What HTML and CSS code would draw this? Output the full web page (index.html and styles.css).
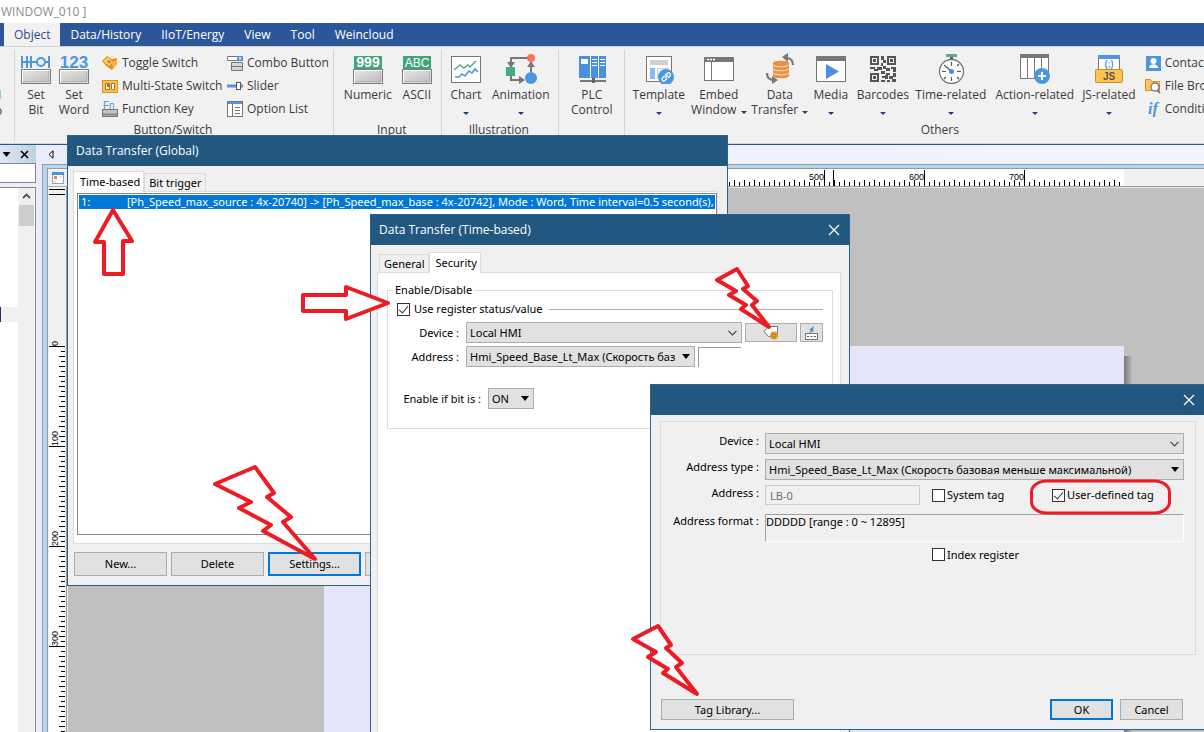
FILE: index.html
```html
<!DOCTYPE html>
<html lang="en">
<head>
<meta charset="utf-8">
<title>WINDOW_010</title>
<link rel="stylesheet" href="styles.css">
</head>
<body>
<svg class="defs" aria-hidden="true">
  <defs>
    <linearGradient id="keyface" x1="0" y1="0" x2="1" y2="1"><stop offset="0" stop-color="#e4e4e4"/><stop offset="1" stop-color="#bdbdbd"/></linearGradient>
    <symbol id="key" viewBox="0 0 30 15"><rect x=".5" y=".5" width="29" height="14" fill="#fff" stroke="#7d7d7d"/><rect x="2" y="2" width="26" height="11" fill="url(#keyface)"/><path d="M2 13h26V2" fill="none" stroke="#a5a5a5"/></symbol>
    <symbol id="chevron" viewBox="0 0 9 6"><path d="M.5.8 4.500 4.800 8.500.8" fill="none" stroke="#444" stroke-width="1.200"/></symbol>
    <symbol id="triangle" viewBox="0 0 8 5"><path d="M0 0h8L4 5z" fill="#000"/></symbol>
    <symbol id="cross" viewBox="0 0 12 12"><path d="M1 1l10 10M11 1 1 11" fill="none" stroke="#fff" stroke-width="1.200"/></symbol>
  </defs>
</svg>
<header class="titlebar">WINDOW_010 ]</header>
<nav class="tabs">
  <button class="tab tab-active">Object</button>
  <button class="tab">Data/History</button>
  <button class="tab">IIoT/Energy</button>
  <button class="tab">View</button>
  <button class="tab">Tool</button>
  <button class="tab">Weincloud</button>
</nav>
<section class="ribbon">
  <div class="group group-cut"><i class="cut-icon"></i><span>o</span></div>
  <div class="group">
    <div class="tools">
      <button class="tool w-38"><svg class="icon" viewBox="0 0 32 32"><path d="M2 4v12M7 4v12M2 10h5M7 10h4M11 4v12M11 10h6M25 10h4M29 4v12" fill="none" stroke="#4a97e0" stroke-width="2"/><circle cx="21" cy="10" r="4" fill="none" stroke="#4a97e0" stroke-width="2"/><use href="#key" x="1" y="17" width="30" height="15"/></svg><span>Set</span><span>Bit</span></button>
      <button class="tool w-38"><svg class="icon" viewBox="0 0 32 32"><text x="16" y="16" class="t-123">123</text><use href="#key" x="1" y="17" width="30" height="15"/></svg><span>Set</span><span>Word</span></button>
      <div class="list list-switch">
        <button class="mini"><svg viewBox="0 0 16 16"><path d="M0 6 5 1l5 3 5-1v6l-5 6-6-4z" fill="#d9942c"/><path d="M1 6l5-4 5 5-4 4z" fill="#ffc960"/><path d="m10 8 5-4v4l-4 6z" fill="#ffb638"/><path d="M5 6.500 7 5l2 2-2 1.500z" fill="#c47e16"/></svg>Toggle Switch</button>
        <button class="mini"><svg viewBox="0 0 16 16"><rect x=".5" y="2.500" width="15" height="12" fill="#ffc04a" stroke="#d8922b"/><path d="M3.500 5.500h4v6h-4zM9.500 5.500h3v6h-3z" fill="#fff" stroke="#a8721e"/><path d="M5 6h2v3H5z" fill="#a8721e"/></svg>Multi-State Switch</button>
        <button class="mini"><svg viewBox="0 0 16 16"><text x="1" y="8" class="t-fn">Fn</text><rect x=".5" y="8.500" width="15" height="7" fill="#c4c4c4" stroke="#777"/><path d="M1 13.500h14" stroke="#888" stroke-width="2"/></svg>Function Key</button>
      </div>
      <div class="list">
        <button class="mini"><svg viewBox="0 0 16 16"><path d="M.5 1.500h15v4H.5z" fill="#fff" stroke="#777"/><path d="M10 1h6v5h-6z" fill="#4a97e0"/><path d="M11.500 2.500h3L13 5z" fill="#fff"/><path d="M4.500 7.500h11v8h-11zM4.500 11.500h11" fill="#d5d5d5" stroke="#777"/></svg>Combo Button</button>
        <button class="mini"><svg viewBox="0 0 16 16"><path d="M0 8h16" stroke="#4a97e0" stroke-width="3"/><rect x="9.500" y="4.500" width="4" height="7" fill="#fff" stroke="#555"/></svg>Slider</button>
        <button class="mini"><svg viewBox="0 0 16 16"><rect x=".5" y=".5" width="15" height="15" fill="#fff" stroke="#777"/><path d="M1 1h14v2H1z" fill="#4a97e0"/><path d="M5.500 3v12M8 6.500h5M8 9.500h5M8 12.500h5" stroke="#777"/></svg>Option List</button>
      </div>
    </div>
    <div class="caption">Button/Switch</div>
  </div>
  <div class="group group-input">
    <div class="tools">
      <button class="tool w-50"><svg class="icon" viewBox="0 0 32 32"><rect x="2" y="4" width="28" height="13" fill="#3fa67c"/><text x="16" y="15" class="t-999">999</text><use href="#key" x="1" y="17" width="30" height="15"/></svg>Numeric</button>
      <button class="tool w-48"><svg class="icon" viewBox="0 0 32 32"><rect x="2" y="4" width="28" height="13" fill="#3fa67c"/><text x="16" y="15" class="t-abc">ABC</text><use href="#key" x="1" y="17" width="30" height="15"/></svg>ASCII</button>
    </div>
    <div class="caption">Input</div>
  </div>
  <div class="group">
    <div class="tools">
      <button class="tool w-44"><svg class="icon" viewBox="0 0 32 32"><rect x="1.500" y="4.500" width="29" height="26" fill="#fff" stroke="#777"/><path d="m4 18 6-5 4 3 4-3 2 2 6-6" fill="none" stroke="#4fa98a" stroke-width="1.500"/><path d="M5 25h4l3-3 3 2 4-5 3 2 3-4 3 3" fill="none" stroke="#4a97e0" stroke-width="1.500"/></svg>Chart<i class="arrow arrow-below"></i></button>
      <button class="tool w-66"><svg class="icon" viewBox="0 0 32 32"><path d="M25 6H6v5M6 23v5h10M26 20v-8" fill="none" stroke="#777" stroke-width="2"/><path d="M2 10h8l-4 6zM14 24v8l6-4zM22 15h8l-4-6z" fill="#777"/><circle cx="26" cy="6" r="4" fill="#ff7058"/><rect x="1" y="15" width="9" height="9" fill="#45aa82"/><circle cx="26" cy="26" r="6" fill="#4a97e0"/></svg>Animation<i class="arrow arrow-below"></i></button>
    </div>
    <div class="caption">Illustration</div>
  </div>
  <div class="group group-plc">
    <div class="tools">
      <button class="tool w-58"><svg class="icon" viewBox="0 0 32 32"><path d="M3 4h11v22H3zM15 4h7v22h-7zM23 4h7v22h-7z" fill="#4a90de"/><path d="M5 7h7v5H5z" fill="#fff"/><path d="M16 7.500h5M16 10.500h5M16 13.500h5M24 7.500h5M24 10.500h5M24 13.500h5" stroke="#fff"/><path d="M4 29h26" stroke="#777" stroke-width="2"/><path d="M16 26h3v5h-3z" fill="#666"/></svg><span>PLC</span><span>Control</span></button>
    </div>
  </div>
  <div class="group group-wide">
    <div class="tools">
      <button class="tool w-58"><svg class="icon" viewBox="0 0 32 32"><rect x="3.500" y="4.500" width="25" height="25" fill="#fff" stroke="#777"/><path d="M7 8h18v5H7z" fill="#d0d0d0"/><path d="M7 16h5v11H7z" fill="#84bdf5"/><path d="M14.500 27V16.500H26" fill="none" stroke="#ccc"/><circle cx="23" cy="25" r="8" fill="#4a97e0"/><path d="m22 26 3-3M21.500 24l-2 2a1.500 1.500 0 0 0 2.500 2.500l2-2M22 23.500l2-2a1.500 1.500 0 0 1 3 2.500l-2 2" fill="none" stroke="#fff" stroke-width="1.300"/></svg>Template<i class="arrow arrow-below"></i></button>
      <button class="tool w-62"><svg class="icon" viewBox="0 0 32 32"><rect x="1.500" y="6.500" width="29" height="22" fill="#fff" stroke="#777"/><path d="M1 5h30v5H1z" fill="#777"/><path d="M4 7.500h2M7 7.500h2M10 7.500h2" stroke="#fff" stroke-width="1.500"/><path d="M8.500 10v18" stroke="#777"/></svg><span>Embed</span><span>Window <i class="arrow"></i></span></button>
      <button class="tool w-60"><svg class="icon" viewBox="0 0 32 32"><path d="M9 11c0-3 16-3 16 0v13c0 3-16 3-16 0z" fill="#ed9144"/><path d="M9 12.500c0 3 16 3 16 0M9 16.500c0 3 16 3 16 0M9 20.500c0 3 16 3 16 0" fill="none" stroke="#ffe3c6"/><path d="M29 13c0-5-3-7-7-7M3 21c0 5 3 7 7 7" fill="none" stroke="#777" stroke-width="2.200"/><path d="m18 5 6-4v9zM14 28l-6-4v8z" fill="#777"/></svg><span>Data</span><span>Transfer <i class="arrow"></i></span></button>
      <button class="tool w-42"><svg class="icon" viewBox="0 0 32 32"><rect x="1.500" y="4.500" width="29" height="25" fill="#fff" stroke="#777"/><path d="M1 4h30v5H1z" fill="#777"/><path d="m11 12 13 7.500L11 27z" fill="#4a90de"/></svg>Media<i class="arrow arrow-below"></i></button>
      <button class="tool w-62"><svg class="icon" viewBox="0 0 32 32"><path d="M4 5h7v7H4zM21 5h7v7h-7zM4 22h7v7H4z" fill="none" stroke="#555" stroke-width="2"/><path d="M6 7h3v3H6zM23 7h3v3h-3zM6 24h3v3H6zM14 4h3v4h-3zM16 8h3v3h-3zM14 11h2v3h-2zM3 15h5v2H3zM7 17h4v2H7zM10 15h5v3h-5zM16 14h3v3h-3zM19 16h4v3h-4zM24 15h5v2h-5zM26 17h3v3h-3zM14 19h4v3h-4zM19 21h4v2h-4zM15 24h3v2h-3zM18 23h3v4h-3zM14 28h4v2h-4zM22 24h4v3h-4zM26 21h3v4h-3zM20 28h3v2h-3zM25 27h4v3h-4z" fill="#555"/></svg>Barcodes<i class="arrow arrow-below"></i></button>
      <button class="tool w-74"><svg class="icon" viewBox="0 0 32 32"><path d="M11 2h11v3H11z" fill="#5fa893"/><path d="M15 5h3v3h-3z" fill="#555"/><circle cx="16.500" cy="19.500" r="12" fill="#fff" stroke="#777" stroke-width="1.300"/><path d="M16.500 10v4M16.500 25v4M7 19.500h4M22 19.500h4M22 14l2-2M22 25l2 2M11 25l-2 2M16 19l-7-6" stroke="#555" stroke-width="1.200"/><circle cx="16.500" cy="19.500" r="2.500" fill="#3d8fe0"/></svg>Time-related<i class="arrow arrow-below"></i></button>
      <button class="tool w-94"><svg class="icon" viewBox="0 0 32 32"><rect x="1.500" y="2.500" width="28" height="24" fill="#fff" stroke="#777"/><path d="M1 2h29v4H1z" fill="#777"/><path d="M8.500 6v20M15.500 6v20M22.500 6v20" stroke="#777"/><circle cx="23" cy="24" r="8" fill="#4a97e0"/><path d="M23 20v8M19 24h8" stroke="#fff" stroke-width="2"/></svg>Action-related<i class="arrow arrow-below"></i></button>
      <button class="tool w-54"><svg class="icon" viewBox="0 0 32 32"><rect x="5.500" y="3.500" width="21" height="14" fill="#fff" stroke="#777"/><path d="M5 3h22v4H5z" fill="#4a97e0"/><text x="16" y="15" class="t-code">(;)</text><rect x="2.500" y="17.500" width="27" height="13" rx="1" fill="#ffc24d" stroke="#c98d2d"/><text x="16" y="28" class="t-js">JS</text></svg>JS-related<i class="arrow arrow-below"></i></button>
      <div class="list">
        <button class="mini"><svg viewBox="0 0 16 16"><rect x="1" y="1" width="15" height="15" fill="#4a97e0"/><circle cx="8.500" cy="6" r="3" fill="#fff"/><path d="M4 13c0-5 9-5 9 0z" fill="#fff"/></svg>Contacts</button>
        <button class="mini"><svg viewBox="0 0 16 16"><path d="M.5 1.500h5l1 2h8v9H.5z" fill="#ffc55c" stroke="#d8922b"/><circle cx="10" cy="9" r="4" fill="#fff" stroke="#777" stroke-width="1.300"/><path d="m12 12 3 3" stroke="#777" stroke-width="1.800"/></svg>File Browser</button>
        <button class="mini"><svg viewBox="0 0 16 16"><text x="8" y="13" class="t-if">if</text></svg>Conditional</button>
      </div>
    </div>
    <div class="caption">Others</div>
  </div>
</section>

<main class="workspace">
  <aside class="side">
    <div class="side-head">
      <svg width="9" height="5"><use href="#triangle"/></svg>
      <svg width="9" height="9" viewBox="0 0 9 9"><path d="m1 1 7 7M8 1 1 8" stroke="#000" stroke-width="1.500"/></svg>
    </div>
    <input class="side-search" aria-label="Search">
    <div class="side-tree">
      <div class="tree-row"></div>
      <div class="scrollbar"><svg width="9" height="6" viewBox="0 0 9 6"><path d="M1 5l3.500-3.500L8 5" fill="none" stroke="#555" stroke-width="1.800"/></svg><i class="thumb"></i></div>
    </div>
  </aside>
  <div class="editor">
    <div class="strip"><svg width="6" height="9" viewBox="0 0 6 9"><path d="M5 .8v7.400L1 4.500z" fill="#fff" stroke="#000"/></svg></div>
    <div class="editor-grid">
      <div class="corner"><svg width="12" height="12" viewBox="0 0 12 12"><rect x=".5" y=".5" width="11" height="11" fill="#fff" stroke="#8aa4c4"/><path d="M0 0h12v3H0z" fill="#4a90de"/><path d="M2 4h3v3H2z" fill="#ed8b45"/><path d="M7 5h3M3 8v3" stroke="#ccc"/></svg></div>
      <svg class="hruler">
        <defs><pattern id="ht" x="6" y="0" width="10" height="17" patternUnits="userSpaceOnUse"><rect y="11" width="1" height="6"/><rect x="5" y="13" width="1" height="4"/></pattern></defs>
        <rect width="1056" height="17" fill="#fff"/><rect width="1056" height="17" fill="url(#ht)"/>
        <path d="M756.500 1v16M765.500 1v16M856.500 1v16M956.500 1v16" stroke="#000"/>
        <g class="ruler-text" text-anchor="end"><text x="756" y="11">500</text><text x="856" y="11">600</text><text x="956" y="11">700</text></g>
      </svg>
      <svg class="vruler">
        <defs><pattern id="vt" x="0" y="159" width="18" height="10" patternUnits="userSpaceOnUse"><rect x="11" width="6" height="1"/><rect x="13" y="5" width="4" height="1"/></pattern></defs>
        <path d="M1 2.500h16M1 7.500h16" stroke="#000"/>
        <rect x="1" y="158" width="16" height="900" fill="#fff"/><rect y="159" width="18" height="900" fill="url(#vt)"/>
        <path d="M1 159.500h16M1 259.500h16M1 359.500h16M1 459.500h16" stroke="#000"/>
        <g class="ruler-text"><text transform="translate(10 159) rotate(-90)">0</text><text transform="translate(10 259) rotate(-90)">100</text><text transform="translate(10 359) rotate(-90)">200</text><text transform="translate(10 459) rotate(-90)">300</text></g>
      </svg>
      <div class="canvas"><div class="page"></div><div class="page-shadow"></div></div>
    </div>
  </div>
</main>

<section class="dialog dialog-global">
  <h2 class="dialog-title">Data Transfer (Global)</h2>
  <div class="dialog-tabs"><button class="dtab dtab-active">Time-based</button><button class="dtab">Bit trigger</button></div>
  <div class="sheet sheet-list">
    <div class="listbox"><div class="list-row"><span class="row-no">1:</span><span>[Ph_Speed_max_source : 4x-20740] -&gt; [Ph_Speed_max_base : 4x-20742], Mode : Word, Time interval=0.5 second(s), trigger</span></div></div>
  </div>
  <div class="buttons"><button class="btn">New...</button><button class="btn">Delete</button><button class="btn btn-default">Settings...</button><button class="btn">Copy</button></div>
</section>

<section class="dialog dialog-time">
  <h2 class="dialog-title">Data Transfer (Time-based)<button class="close" aria-label="Close"><svg width="12" height="12"><use href="#cross"/></svg></button></h2>
  <div class="dialog-tabs"><button class="dtab">General</button><button class="dtab dtab-active">Security</button></div>
  <div class="sheet sheet-security">
    <fieldset>
      <legend>Enable/Disable</legend>
      <div class="register"><label class="check"><input type="checkbox" checked>Use register status/value</label><i class="rule"></i></div>
      <div class="field">
        <label for="d2-device">Device :</label>
        <span class="pick w-276"><select id="d2-device"><option>Local HMI</option></select><svg width="9" height="6"><use href="#chevron"/></svg></span>
        <button class="btn btn-tag" aria-label="Tag"><svg width="16" height="15" viewBox="0 0 16 15"><path d="M1 6.500 5.500 1.500H14.500V11.500H5.500z" fill="#fff" stroke="#777"/><circle cx="11" cy="10.500" r="4" fill="#e0a030"/><circle cx="11" cy="10.500" r="2" fill="none" stroke="#b57b20"/></svg></button>
        <button class="btn btn-key" aria-label="Address input"><svg width="13" height="14" viewBox="0 0 13 14"><path d="m9 0-5 4h2L4 7l5-2-1-1z" fill="#3d8fe0"/><rect x=".5" y="7.500" width="12" height="6" fill="#fff" stroke="#777"/><path d="M2 10.500h2M5.500 10.500h2M9 10.500h2" stroke="#555"/></svg></button>
      </div>
      <div class="field">
        <label for="d2-address">Address :</label>
        <span class="pick w-229"><select id="d2-address"><option>Hmi_Speed_Base_Lt_Max (Скорость базовая меньше максимальной)</option></select><svg width="8" height="5"><use href="#triangle"/></svg></span>
        <input class="sunken" aria-label="Address value">
      </div>
      <div class="field field-bit">
        <label for="d2-bit">Enable if bit is :</label>
        <span class="pick w-46"><select id="d2-bit"><option>ON</option></select><svg width="8" height="5"><use href="#triangle"/></svg></span>
      </div>
    </fieldset>
  </div>
</section>

<section class="dialog dialog-address">
  <h2 class="dialog-title"><button class="close" aria-label="Close"><svg width="12" height="12"><use href="#cross"/></svg></button></h2>
  <div class="frame">
    <label for="d3-device">Device :</label>
    <span class="pick span-all"><select id="d3-device"><option>Local HMI</option></select><svg width="9" height="6"><use href="#chevron"/></svg></span>
    <label for="d3-type">Address type :</label>
    <span class="pick span-all"><select id="d3-type"><option>Hmi_Speed_Base_Lt_Max (Скорость базовая меньше максимальной)</option></select><svg width="8" height="5"><use href="#triangle"/></svg></span>
    <label for="d3-address">Address :</label>
    <input class="address" id="d3-address" value="LB-0" disabled>
    <label class="check"><input type="checkbox">System tag</label>
    <label class="check"><input type="checkbox" checked>User-defined tag</label>
    <label class="format-label" for="d3-format">Address format :</label>
    <output class="format span-all" id="d3-format">DDDDD [range : 0 ~ 12895]</output>
    <label class="check index"><input type="checkbox">Index register</label>
  </div>
  <div class="footer"><button class="btn btn-library">Tag Library...</button><button class="btn btn-default">OK</button><button class="btn">Cancel</button></div>
</section>

<svg class="marks" viewBox="0 0 1204 732" width="1204" height="732" aria-hidden="true">
  <path d="M113 210 132 241H123V274H104V242H95z"/>
  <path d="M303 295H346V287L388 303 346 319V311H303z"/>
  <path d="M255 467 274 493 267 497 291 517 283 522 315 559 263 531 271 525 239 508 251 502 215 484z"/>
  <path d="M737 269 748 286 743 289 757 301 752 305 769 327 741 309 746 305 729 295 736 291 717 280z"/>
  <path d="M658 626 671 645 666 648 682 663 676 667 697 694 663 673 668 669 648 657 656 652 633 639z"/>
  <rect x="1031.500" y="481" width="138" height="32" rx="15" ry="11" class="ring"/>
</svg>
</body>
</html>
```
FILE: styles.css
```css
:root { --ui: "Open Sans", "Noto Sans", sans-serif; --dlg: "Noto Sans", sans-serif; }
* { box-sizing: border-box; }
body { margin: 0; height: 100vh; display: flex; flex-direction: column; overflow: hidden; position: relative; background: #fff; font: 12px/15px var(--ui); color: #3b3b3b; }
button, input, select { font: inherit; color: inherit; margin: 0; border-radius: 0; }
button { padding: 0; border: 0; background: none; }
svg { display: block; flex: none; }
.defs { position: absolute; width: 0; height: 0; }
.titlebar { height: 23px; padding-left: 1px; line-height: 23px; color: #8f8a8a; }
.tabs { display: flex; height: 23px; padding-left: 4px; background: #2b579a; }
.tab { padding: 0 10px; color: #fff; }
.tab-active { background: #f1f1f1; color: #2b4d84; }
.ribbon { display: flex; height: 98px; padding-top: 3px; background: #f1f1f1; border-top: 1px solid #d5d5d5; border-bottom: 1px solid #d5d5d5; overflow: hidden; }
.group { display: flex; flex-direction: column; flex: none; border-right: 1px solid #d5d5d5; padding: 0 4px 0 2px; height: 91px; }
.group-cut { width: 15px; padding: 40px 0 0; overflow: hidden; line-height: 15px; }
.group-cut span { margin: 4px 0 0 -5px; }
.cut-icon { width: 1px; height: 9px; background: #84cdf2; }
.group-input { padding: 0 0 0 9px; }
.group-plc { padding: 0 3px 0 4px; }
.group-wide { padding-left: 5px; width: 630px; }
.tools { display: flex; height: 73px; }
.tool { display: flex; flex-direction: column; align-items: center; height: 73px; line-height: 15px; white-space: nowrap; }
.icon { width: 32px; height: 32px; margin: 2px 0 3px; }
.arrow { display: inline-block; border: 3px solid transparent; border-top-color: #1f3d78; border-bottom: 0; margin-left: 1px; }
.arrow-below { margin: 10px 0 0; }
.list { display: grid; grid-auto-rows: 23px; margin-left: 9px; padding-top: 1px; }
.list-switch { width: 116px; }
.mini { display: flex; align-items: center; gap: 4px; white-space: nowrap; }
.mini svg { width: 16px; height: 16px; }
.caption { text-align: center; line-height: 14px; }
.w-38 { width: 38px; } .w-42 { width: 42px; } .w-44 { width: 44px; } .w-48 { width: 48px; } .w-50 { width: 50px; } .w-54 { width: 54px; }
.w-58 { width: 58px; } .w-60 { width: 60px; } .w-62 { width: 62px; } .w-66 { width: 66px; } .w-74 { width: 74px; } .w-94 { width: 94px; }
.t-123, .t-999, .t-abc, .t-js, .t-code { text-anchor: middle; font-family: "Liberation Sans", sans-serif; font-weight: bold; }
.t-123 { font-size: 17px; fill: #4a97e0; }
.t-999 { font-size: 14px; fill: #fff; }
.t-abc { font-size: 12px; font-weight: normal; fill: #fff; }
.t-js { font-size: 10px; fill: #555; }
.t-code { font-size: 9px; fill: #4a97e0; }
.t-fn { font: 10px "Liberation Sans", sans-serif; fill: #4a97e0; }
.t-if { font: italic bold 16px "Liberation Serif", serif; text-anchor: middle; fill: #4a97e0; }

.workspace { flex: 1; display: flex; min-height: 0; border-top: 1px solid #2b579a; background: #ebecf9; }
.side { width: 36px; display: flex; flex-direction: column; flex: none; }
.side-head { display: flex; justify-content: space-between; align-items: center; height: 18px; padding: 0 7px 0 2px; background: linear-gradient(90deg, #dfe5f2, #c0d1df); }
.side-search { width: 36px; height: 20px; border: 1px solid #828790; border-left: 0; background: #fff; }
.side-tree { display: flex; flex: 1; margin-top: 4px; border: 1px solid #828790; border-width: 1px 1px 0 0; background: #fff; }
.tree-row { flex: 1; height: 15px; margin-top: 119px; background: #f0f0f0; border-left: 1px solid #203080; }
.scrollbar { width: 16px; margin-right: 1px; padding-top: 5px; background: #f0f0f0; display: flex; flex-direction: column; align-items: center; gap: 6px; }
.thumb { width: 15px; height: 21px; background: #cdcdcd; }
.editor { flex: 1; display: flex; flex-direction: column; margin-left: 6px; min-width: 0; }
.strip { height: 19px; padding: 5px 0 0 6px; background: linear-gradient(90deg, #ebecf9, #f1f5fd); }
.editor-grid { flex: 1; display: grid; grid-template: 18px 1fr / 20px 1fr; min-height: 0; border: 1px solid #999; border-width: 1px 0 0 1px; box-shadow: inset 4px 3px #b3d7f2, inset 5px 4px #999; padding: 4px 0 0 5px; }
.corner { display: grid; place-items: center; background: #f0f0f0; border: 1px solid #aaa; border-width: 0 1px 1px 0; }
.hruler { width: 100%; height: 18px; background: #f0f0f0; border-bottom: 1px solid #999; }
.vruler { width: 19px; height: 100%; background: #f0f0f0; border-right: 1px solid #999; }
.ruler-text { font: 9px "Liberation Sans", sans-serif; fill: #000; }
.canvas { position: relative; background: #c0c0c0; overflow: hidden; border-top: 1px solid #e8e8e8; }
.page { position: absolute; left: 256px; top: 158px; width: 800px; height: 480px; background: #e4e5f8; }
.page-shadow { position: absolute; left: 1056px; top: 168px; width: 8px; height: 480px; background: linear-gradient(90deg, #777, #b8b8b8); }

.dialog { position: absolute; display: flex; flex-direction: column; background: #f0f0f0; border: 1px solid #2c628b; font: 11px/14px var(--dlg); color: #000; }
.dialog-title { display: flex; align-items: center; height: 30px; margin: 0; padding: 0 9px 0 8px; background: #22587f; color: #fff; font: 12px/30px var(--ui); flex: none; }
.close { margin-left: auto; }
.dialog-tabs { display: flex; align-items: flex-end; height: 20px; flex: none; }
.dtab { height: 18px; padding: 0 3px 0 4px; border: 1px solid #dcdcdc; border-bottom: 0; background: #f0f0f0; }
.dtab-active { height: 21px; padding: 0 3px 0 6px; background: #fff; margin-bottom: -1px; position: relative; }
.sheet { background: #fff; border: 1px solid #dcdcdc; }
.btn { background: #e1e1e1; border: 1px solid #adadad; white-space: nowrap; }
.btn-default { border: 2px solid #0078d7; }
.dialog-global { left: 67px; top: 135px; width: 661px; height: 451px; }
.dialog-global .dialog-tabs { margin: 5px 5px 0; }
.sheet-list { flex: 1; margin: 0 9px 0 5px; padding: 1px 0 8px 3px; min-height: 0; display: flex; }
.listbox { flex: 1; border: 1px solid #828790; padding: 1px; min-width: 0; }
.list-row { display: flex; height: 14px; padding-left: 2px; background: #0078d7; color: #fff; white-space: nowrap; overflow: hidden; }
.row-no { width: 46px; flex: none; }
.buttons { display: flex; gap: 4px; padding: 8px 6px 9px; overflow: hidden; }
.buttons .btn { width: 93px; height: 24px; flex: none; }
.dialog-time { left: 370px; top: 214px; width: 480px; height: 540px; }
.dialog-time .dialog-tabs { margin: 7px 8px 0; }
.sheet-security { flex: 1; margin: 0 8px 0 6px; padding: 10px 7px 0 9px; }
fieldset { margin: 0; padding: 5px 9px 16px 9px; border: 1px solid #dcdcdc; min-width: 0; }
legend { padding: 0 2px; margin-left: -4px; }
.register { display: flex; align-items: center; gap: 6px; margin-bottom: 6px; }
.rule { flex: 1; height: 1px; background: #adadad; }
.check { display: flex; align-items: center; gap: 4px; white-space: nowrap; }
.check input { appearance: none; position: relative; width: 13px; height: 13px; border: 1px solid #333; background: #fff; }
.check input:checked::after { content: ""; position: absolute; left: 3px; top: 0; width: 4px; height: 8px; border: solid #333; border-width: 0 1px 1px 0; transform: rotate(40deg); }
.field { display: flex; align-items: center; gap: 3px; margin-bottom: 3px; }
.field > label { width: 66px; text-align: right; white-space: nowrap; padding-right: 4px; flex: none; }
.pick { display: grid; grid-template-columns: minmax(0, 1fr); align-items: center; height: 21px; flex: none; }
.pick > * { grid-area: 1 / 1; }
.pick svg { justify-self: end; margin-right: 5px; pointer-events: none; }
.pick select { appearance: none; width: 100%; height: 100%; padding: 0 19px 0 3px; background: #e1e1e1; border: 1px solid #adadad; }
.w-276 { width: 276px; } .w-229 { width: 229px; } .w-46 { width: 46px; }
.btn-tag { width: 52px; height: 19px; display: grid; place-items: center; }
.btn-key { width: 23px; height: 19px; display: grid; place-items: center; }
.sunken { width: 43px; height: 20px; border: solid #999; border-width: 1px 0 0 1px; background: #fff; }
.field-bit { margin-top: 21px; }
.field-bit > label { width: 88px; }
.dialog-address { left: 650px; top: 384px; width: 555px; height: 346px; }
.frame { display: grid; grid-template-columns: 98px 161px 114px 1fr; column-gap: 6px; grid-template-rows: 21px 21px 20px 32px 15px; row-gap: 5px; align-items: center; height: 234px; margin: 6px 8px 0 9px; padding: 11px 11px 0 0; border: 1px solid #dcdcdc; }
.frame > label:not(.check) { text-align: right; align-self: start; padding-top: 1px; }
.frame > .format-label:not(.check) { padding-top: 4px; }
.frame .check { gap: 2px; }
.span-all { grid-column: 2 / -1; }
.address { width: 155px; height: 20px; padding: 0 4px; border: 1px solid #ccc; background: #f0f0f0; color: #6d6d6d; }
.format { height: 28px; align-self: end; border: 1px solid; border-color: #a0a0a0 #fff #fff #a0a0a0; }
.index { grid-column: 3; }
.footer { display: flex; gap: 7px; padding: 44px 21px 0 10px; }
.footer .btn { width: 63px; height: 21px; }
.footer .btn-library { width: 133px; margin-right: auto; }
.marks { position: absolute; left: 0; top: 0; pointer-events: none; }
.marks path, .ring { fill: #fff; stroke: #ed1c24; stroke-width: 4; stroke-linejoin: round; }
.marks .ring { fill: none; stroke-width: 3; }
```
